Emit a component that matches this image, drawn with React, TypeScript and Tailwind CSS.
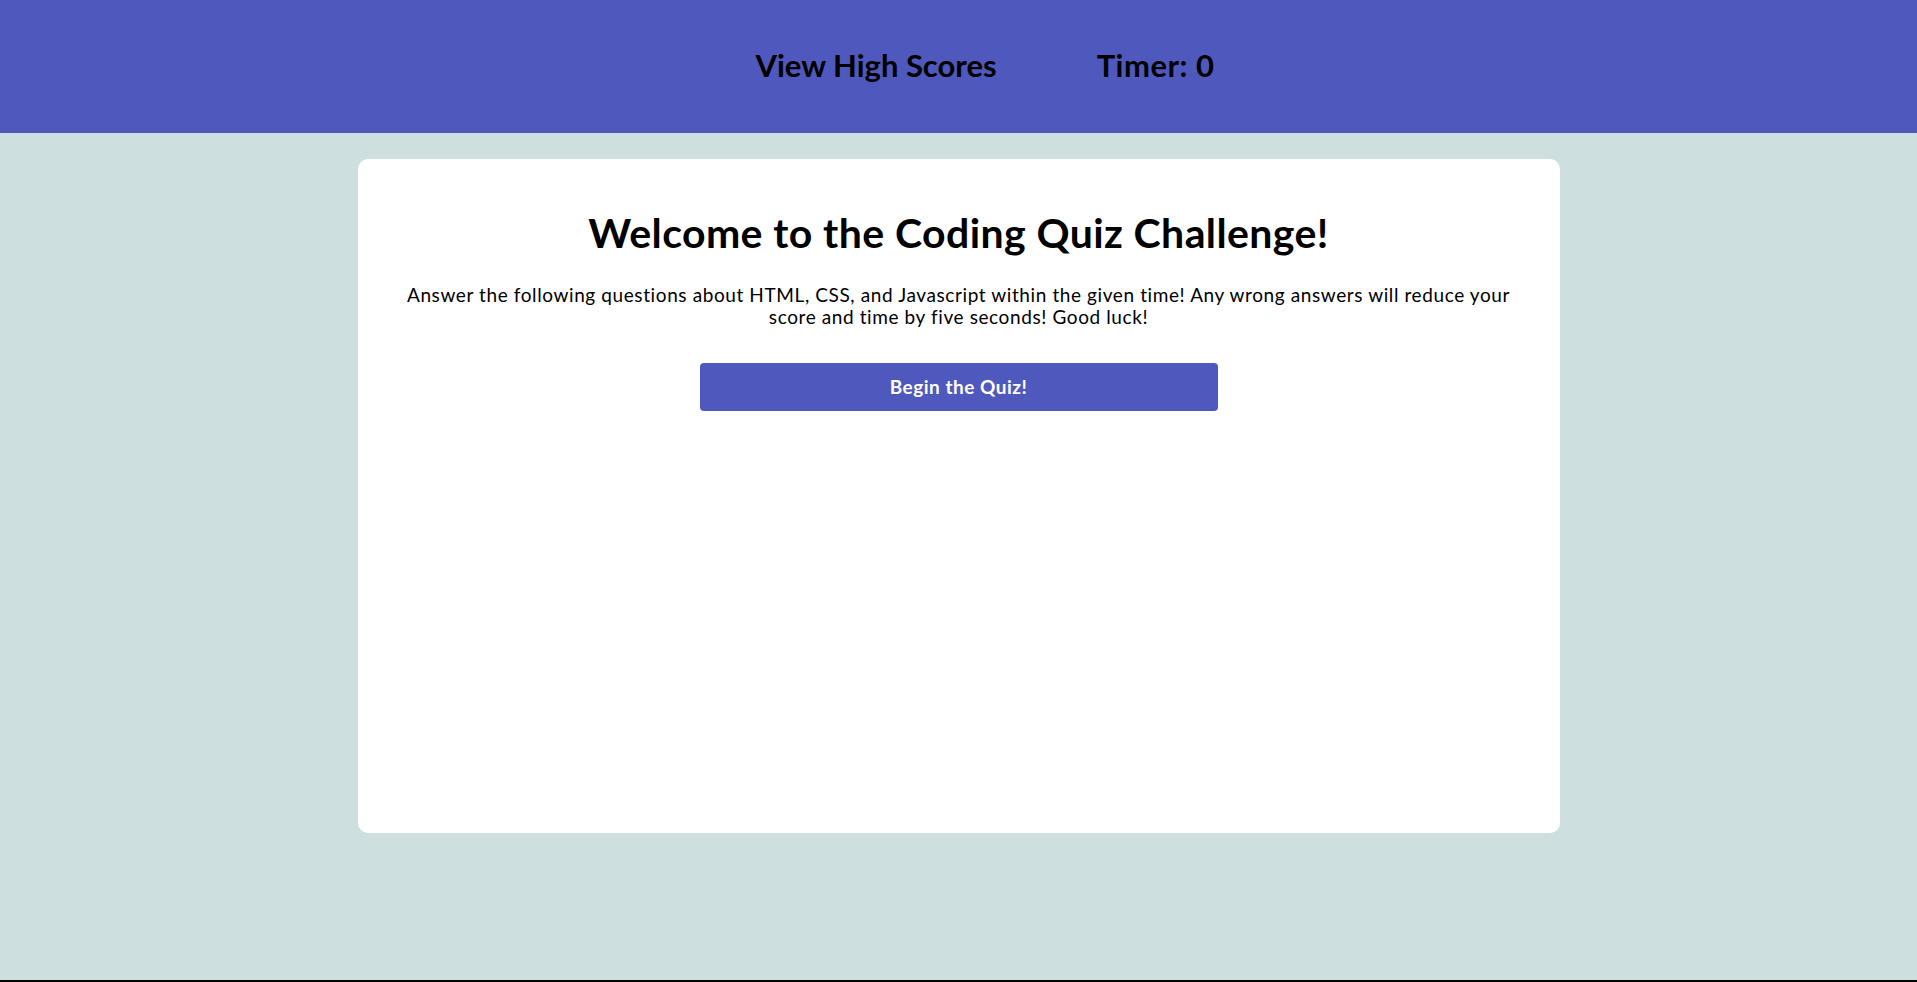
export default function App() {
  const font = { fontFamily: '"Trebuchet MS", Lato, "Open Sans", sans-serif' };
  return (
    <div className="min-h-[982px] w-full bg-[#cddfdf] flex flex-col" style={font}>
      <header className="h-[133px] bg-[#4f58bc] flex items-center justify-center gap-[100px] pl-[53px] pb-[4px]">
        <span className="text-[31px] font-bold text-black leading-[40px]">View High Scores</span>
        <span className="text-[31px] font-bold text-black leading-[40px] tracking-[0.5px]">Timer: 0</span>
      </header>
      <main className="flex-1 flex flex-col">
        <section className="mt-[26px] mx-auto w-[1202px] h-[674px] bg-white rounded-[10px] px-[40px] pt-[50px] flex flex-col items-center">
          <h1 className="text-[41px] font-bold text-black leading-[48px] text-center tracking-[0.4px]">
            Welcome to the Coding Quiz Challenge!
          </h1>
          <p className="mt-[27px] text-[19px] text-black leading-[22px] text-center tracking-[0.6px]">
            Answer the following questions about HTML, CSS, and Javascript within the given time! Any wrong answers will reduce your score and time by five seconds! Good luck!
          </p>
          <button className="mt-[35px] w-[518px] h-[48px] rounded-[4px] bg-[#4f58bc] text-white text-[19px] font-bold tracking-[0.5px]">
            Begin the Quiz!
          </button>
        </section>
      </main>
      <div className="h-[2px] bg-black" />
    </div>
  );
}
